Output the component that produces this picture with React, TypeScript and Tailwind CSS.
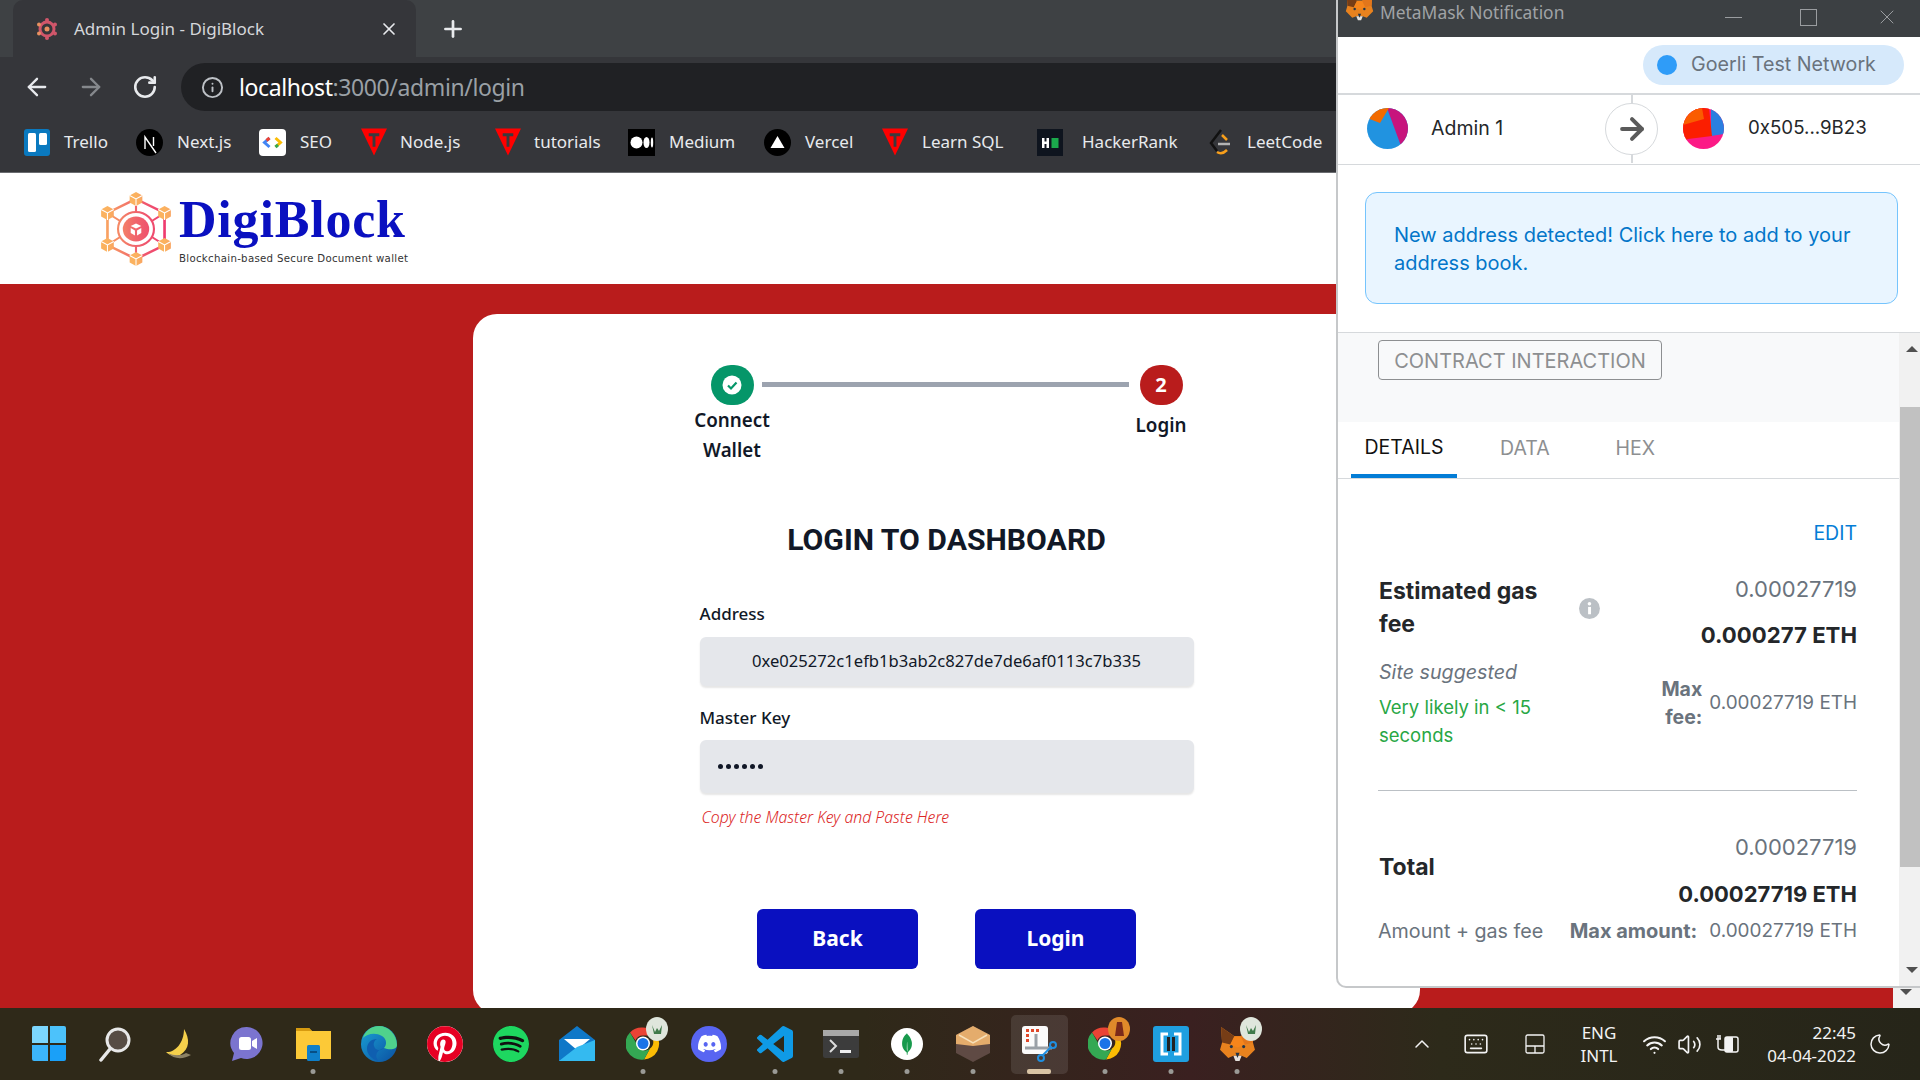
import { ChevronUp, Info, Keyboard, Moon, Volume2, Wifi, Plus, X, ArrowLeft, ArrowRight, RotateCw } from "lucide-react";
import { SiDiscord, SiMongodb, SiPinterest, SiSpotify } from "react-icons/si";

const chromeFont = "font-['Noto_Sans',sans-serif]";

const TriangleMark = () => (
  <svg width="26" height="28" viewBox="0 0 27 28">
    <polygon points="0,0 27,0 13.5,28" fill="#ff0000" />
    <path d="M8 5h11v3h-4v11h-3V8H8z" fill="#3a3a3e" />
  </svg>
);

const bookmarks = [
  {
    label: "Trello",
    width: "w-[112px]",
    gap: "gap-[14px]",
    icon: (
      <svg width="26" height="27" viewBox="0 0 26 27">
        <rect width="26" height="27" rx="3" fill="#0a79bf" />
        <rect x="4" y="4" width="8" height="19" rx="1.5" fill="#fff" />
        <rect x="15" y="4" width="8" height="12" rx="1.5" fill="#fff" />
      </svg>
    ),
  },
  {
    label: "Next.js",
    width: "w-[123px]",
    gap: "gap-[14px]",
    icon: (
      <svg width="27" height="27" viewBox="0 0 27 27">
        <circle cx="13.5" cy="13.5" r="13.5" fill="#000" />
        <path d="M9 20V8l11 16M17.5 8v9" stroke="#fff" strokeWidth="1.4" fill="none" />
      </svg>
    ),
  },
  {
    label: "SEO",
    width: "w-[102px]",
    gap: "gap-[14px]",
    icon: (
      <svg width="27" height="27" viewBox="0 0 27 27">
        <rect width="27" height="27" rx="4" fill="#fff" />
        <path d="M10.500 9l-5 4.500 5 4.500" stroke="#4285f4" strokeWidth="3" fill="none" />
        <path d="M7.500 11.500l3-2.500" stroke="#ea4335" strokeWidth="3" fill="none" />
        <path d="M16.500 9l5 4.500-5 4.500" stroke="#fbbc04" strokeWidth="3" fill="none" />
        <path d="M16.500 18l2.500-2.200" stroke="#34a853" strokeWidth="3" fill="none" />
      </svg>
    ),
  },
  { label: "Node.js", width: "w-[134px]", gap: "gap-[13px]", icon: <TriangleMark /> },
  { label: "tutorials", width: "w-[133px]", gap: "gap-[13px]", icon: <TriangleMark /> },
  {
    label: "Medium",
    width: "w-[136px]",
    gap: "gap-[14px]",
    icon: (
      <svg width="27" height="27" viewBox="0 0 27 27">
        <rect width="27" height="27" fill="#000" />
        <circle cx="8.500" cy="13.500" r="6" fill="#fff" />
        <ellipse cx="18.500" cy="13.500" rx="3" ry="5.500" fill="#fff" />
        <ellipse cx="24" cy="13.500" rx="1.200" ry="5" fill="#fff" />
      </svg>
    ),
  },
  {
    label: "Vercel",
    width: "w-[118px]",
    gap: "gap-[14px]",
    icon: (
      <svg width="27" height="27" viewBox="0 0 27 27">
        <circle cx="13.500" cy="13.500" r="13.500" fill="#000" />
        <polygon points="13.500,7 20.500,19 6.500,19" fill="#fff" />
      </svg>
    ),
  },
  { label: "Learn SQL", width: "w-[155px]", gap: "gap-[14px]", icon: <TriangleMark /> },
  {
    label: "HackerRank",
    width: "w-[171px]",
    gap: "gap-[19px]",
    icon: (
      <svg width="26" height="27" viewBox="0 0 26 27">
        <rect width="26" height="27" fill="#0e141e" />
        <path d="M5 9h2.500v3.500h2V9H12v10H9.500v-4h-2v4H5z" fill="#fff" />
        <rect x="14.500" y="9" width="7" height="10" fill="#1ba94c" />
      </svg>
    ),
  },
  {
    label: "LeetCode",
    width: "w-[120px]",
    gap: "gap-[15px]",
    icon: (
      <svg width="24" height="27" viewBox="0 0 24 27">
        <path d="M13 1L3 14l6 8" stroke="#111" strokeWidth="2.500" fill="none" />
        <path d="M14 6l5 5M9 23c3 2 7 1 10-2" stroke="#f89f1b" strokeWidth="2.500" fill="none" />
        <path d="M10 15h12" stroke="#b3b3b3" strokeWidth="2.500" />
      </svg>
    ),
  },
];

const Fox = ({ size = 36 }: { size?: number }) => (
  <svg width={size} height={size} viewBox="0 0 36 36">
    <polygon points="2,2 15,11 21,11 34,2 33,17 35,24 27,32 22,30 14,30 9,32 1,24 3,17" fill="#e8821e" />
    <polygon points="2,2 15,11 11,19 3,17" fill="#763d16" />
    <polygon points="34,2 21,11 25,19 33,17" fill="#e2761b" />
    <polygon points="15,11 21,11 25,19 18,22 11,19" fill="#f6851b" />
    <polygon points="14,30 22,30 20,35 16,35" fill="#e4e0dc" />
    <polygon points="16,27 20,27 18,32" fill="#233447" />
    <circle cx="12" cy="21" r="1.500" fill="#233447" />
    <circle cx="24" cy="21" r="1.500" fill="#233447" />
  </svg>
);

const ChromeIcon = () => (
  <svg width="34" height="35" viewBox="0 0 34 34">
    <path d="M17 1a16 16 0 0 1 14 8H17a8 8 0 0 0-7.500 5L4 6a16 16 0 0 1 13-5z" fill="#ea4335" />
    <path d="M31 9a16 16 0 0 1-13 24l6-11a8 8 0 0 0 0-13z" fill="#fbbc04" />
    <path d="M4 6l7 12a8 8 0 0 0 13 4l-6 11A16 16 0 0 1 4 6z" fill="#34a853" />
    <circle cx="17" cy="17" r="7" fill="#fff" />
    <circle cx="17" cy="17" r="5.500" fill="#1a73e8" />
  </svg>
);

// profile badge over the chrome / metamask icons
const GreenBadge = () => (
  <svg width="22" height="24" viewBox="0 0 22 24">
    <ellipse cx="11" cy="12" rx="11" ry="12" fill="#dfe6dc" />
    <path d="M6 8l3 7 2-4 2 3 3-6-1 9H8z" fill="#3f7a4a" />
  </svg>
);

const OrangeBadge = () => (
  <svg width="22" height="24" viewBox="0 0 22 24">
    <ellipse cx="11" cy="12" rx="11" ry="12" fill="#e08a2a" />
    <path d="M9 5h5l2 14H7z" fill="#7a2a1a" />
  </svg>
);

const taskbarIcons = [
  {
    dot: "",
    icon: (
      <div className="grid h-[35px] w-[34px] grid-cols-2 gap-[2px]">
        <span className="rounded-tl-[2px] bg-[#7cd6fd]" />
        <span className="rounded-tr-[2px] bg-[#4cc2fb]" />
        <span className="rounded-bl-[2px] bg-[#3cb5fb]" />
        <span className="rounded-br-[2px] bg-[#1aa0f8]" />
      </div>
    ),
  },
  {
    dot: "",
    icon: (
      <svg width="34" height="36" viewBox="0 0 34 36">
        <circle cx="20" cy="14" r="11" fill="#574c44" stroke="#e8e8e8" strokeWidth="3" />
        <path d="M12 23L3 34" stroke="#e8e8e8" strokeWidth="3.500" strokeLinecap="round" />
      </svg>
    ),
  },
  {
    dot: "",
    icon: (
      <svg width="34" height="34" viewBox="0 0 34 34">
        <path d="M20 2c6 10 6 20-4 26-5 2-10 1-14-3 8 1 18-8 18-23z" fill="#f5d04b" />
        <path d="M4 26c6 3 13 3 18 0l5 2c-7 4-17 5-23-2z" fill="#8c8164" />
      </svg>
    ),
  },
  {
    dot: "",
    icon: (
      <svg width="34" height="36" viewBox="0 0 34 36">
        <path d="M17 1a16 16 0 1 1-6 31l-9 3 2-8A16 16 0 0 1 17 1z" fill="#7b74cf" />
        <rect x="9" y="11" width="12" height="13" rx="2.500" fill="#fff" />
        <path d="M22 15l5-3v11l-5-3z" fill="#fff" />
      </svg>
    ),
  },
  {
    dot: "bg-[#9a9a96]",
    icon: (
      <svg width="37" height="35" viewBox="0 0 37 35">
        <path d="M1 2h13l3 3h19v28H1z" fill="#fcc937" />
        <path d="M1 2h13l3 3H1z" fill="#d69a10" />
        <rect x="12" y="19" width="13" height="16" rx="1.500" fill="#0f7fc9" />
        <rect x="15" y="25" width="7" height="2" fill="#074f85" />
      </svg>
    ),
  },
  {
    dot: "",
    icon: (
      <svg width="36" height="36" viewBox="0 0 36 36">
        <defs>
          <linearGradient id="edgeGrad" x1="0" y1="0" x2="1" y2="1">
            <stop offset="0" stopColor="#1aa2d6" />
            <stop offset="1" stopColor="#0b4fa0" />
          </linearGradient>
        </defs>
        <circle cx="18" cy="18" r="18" fill="url(#edgeGrad)" />
        <path d="M36 19C36 8 27 0 18 0 10 0 4 5 2 12c4-4 12-6 19-2 5 3 5 9 2 12 5 2 13 2 13-3z" fill="#4fd18c" />
        <path d="M23 22c-4 4-9 2-10-2-1-3 1-6 3-7-6 0-10 4-10 10 0 5 5 11 12 12-5-4-3-11 5-13z" fill="#0f5fb0" />
      </svg>
    ),
  },
  {
    dot: "",
    icon: (
      <span className="flex h-9 w-9 items-center justify-center rounded-full bg-white text-[#e60023]">
        <SiPinterest size={36} />
      </span>
    ),
  },
  {
    dot: "",
    icon: (
      <span className="flex h-9 w-9 items-center justify-center rounded-full bg-[#111] text-[#1ed760]">
        <SiSpotify size={36} />
      </span>
    ),
  },
  {
    dot: "",
    icon: (
      <svg width="36" height="35" viewBox="0 0 36 35">
        <polygon points="18,0 36,14 36,35 0,35 0,14" fill="#0f78c8" />
        <polygon points="5,13 31,13 18,24" fill="#fff" />
        <polygon points="36,14 36,35 0,35 18,21" fill="#34baf0" />
      </svg>
    ),
  },
  {
    dot: "bg-[#9a9a96]",
    badge: <GreenBadge />,
    icon: <ChromeIcon />,
  },
  {
    dot: "",
    icon: (
      <span className="flex h-9 w-9 items-center justify-center rounded-full bg-[#5865f2] text-white">
        <SiDiscord size={23} />
      </span>
    ),
  },
  {
    dot: "bg-[#9a9a96]",
    icon: (
      <svg width="36" height="36" viewBox="0 0 24 24">
        <path
          d="M23.15 2.587L18.21.21a1.494 1.494 0 0 0-1.705.29l-9.46 8.63-4.12-3.128a.999.999 0 0 0-1.276.057L.327 7.261A1 1 0 0 0 .326 8.74L3.899 12 .326 15.26a1 1 0 0 0 .001 1.479L1.65 17.94a.999.999 0 0 0 1.276.057l4.12-3.128 9.46 8.63a1.492 1.492 0 0 0 1.704.29l4.942-2.377A1.5 1.5 0 0 0 24 20.06V3.939a1.5 1.5 0 0 0-.85-1.352zm-5.146 14.861L10.826 12l7.178-5.448v10.896z"
          fill="#0f9ae6"
        />
      </svg>
    ),
  },
  {
    dot: "bg-[#9a9a96]",
    icon: (
      <svg width="36" height="28" viewBox="0 0 36 28">
        <rect width="36" height="28" rx="2.500" fill="#3c3c3c" />
        <rect width="36" height="6" fill="#a8a8a8" />
        <path d="M7 10l6 6-6 6" stroke="#ddd" strokeWidth="2" fill="none" />
        <rect x="17" y="20" width="11" height="3" fill="#eee" />
      </svg>
    ),
  },
  {
    dot: "bg-[#9a9a96]",
    icon: (
      <span className="flex h-[32px] w-[32px] items-center justify-center rounded-full bg-white text-[#189a4d]">
        <SiMongodb size={22} />
      </span>
    ),
  },
  {
    dot: "bg-[#9a9a96]",
    icon: (
      <svg width="34" height="36" viewBox="0 0 34 36">
        <polygon points="17,0 34,9 34,27 17,36 0,27 0,9" fill="#5f4a44" />
        <polygon points="17,0 34,9 34,18 17,20 0,18 0,9" fill="#e4ac6c" />
        <path d="M3 9l14 8 14-8" stroke="#f8e0b8" strokeWidth="1.500" fill="none" />
      </svg>
    ),
  },
  {
    dot: "bg-[#d9c4a4] !w-[24px] !rounded-[2px]",
    active: true,
    icon: (
      <svg width="36" height="36" viewBox="0 0 36 36">
        <rect x="1" y="0" width="26" height="28" rx="3" fill="#fbfbfb" />
        <rect x="5" y="3" width="3" height="3" fill="#e0482a" />
        <rect x="10" y="3" width="3" height="3" fill="#e0482a" />
        <rect x="15" y="3" width="3" height="3" fill="#e0482a" />
        <rect x="5" y="8" width="3" height="3" fill="#e0482a" />
        <rect x="5" y="13" width="3" height="3" fill="#e0482a" />
        <path d="M15 8v14M4 22h27" stroke="#9aa0a6" strokeWidth="3" />
        <circle cx="32" cy="19" r="3" fill="none" stroke="#1f8fe0" strokeWidth="2" />
        <circle cx="20" cy="32" r="3" fill="none" stroke="#1f8fe0" strokeWidth="2" />
        <path d="M22 29l8-8" stroke="#1f8fe0" strokeWidth="2" />
      </svg>
    ),
  },
  {
    dot: "bg-[#9a9a96]",
    badge: <OrangeBadge />,
    icon: <ChromeIcon />,
  },
  {
    dot: "bg-[#9a9a96]",
    icon: (
      <svg width="36" height="36" viewBox="0 0 36 36">
        <rect width="36" height="36" rx="3" fill="#1f9fe0" />
        <path d="M15 8H9v20h6" fill="none" stroke="#fff" strokeWidth="3" />
        <path d="M21 8h6v20h-6" fill="none" stroke="#fff" strokeWidth="3" />
        <rect x="14" y="11" width="3" height="14" fill="#222" />
        <rect x="19" y="11" width="3" height="14" fill="#222" />
      </svg>
    ),
  },
  {
    dot: "bg-[#9a9a96]",
    badge: <GreenBadge />,
    icon: <Fox size={37} />,
  },
];

const BrowserChrome = () => (
  <div className={`${chromeFont} shrink-0`}>
    <div className="flex h-[57px] bg-[#3e4144] pl-[13px]">
      <div className="flex h-full w-[403px] items-center rounded-t-[10px] bg-[#35363a] pl-[22px] pr-[17px]">
        <svg width="24" height="24" viewBox="0 0 24 24">
          <circle cx="12" cy="12" r="7" fill="none" stroke="#d0566a" strokeWidth="3" />
          <circle cx="12" cy="12" r="2.500" fill="#e89060" />
          <circle cx="12" cy="3" r="2" fill="#d0566a" />
          <circle cx="12" cy="21" r="2" fill="#d0566a" />
          <circle cx="4" cy="7.500" r="2" fill="#e89060" />
          <circle cx="20" cy="7.500" r="2" fill="#d0566a" />
          <circle cx="4" cy="16.500" r="2" fill="#e89060" />
          <circle cx="20" cy="16.500" r="2" fill="#d0566a" />
        </svg>
        <span className="ml-[15px] flex-1 text-[17px] text-[#d5d7da]">Admin Login - DigiBlock</span>
        <X size={20} className="text-[#e8eaed]" />
      </div>
      <div className="flex items-center pl-[24px] text-[#e8eaed]">
        <Plus size={26} strokeWidth={2.5} />
      </div>
    </div>
    <div className="flex h-[55px] items-center bg-[#35363a] pb-[1px] pt-[6px]">
      <ArrowLeft size={28} strokeWidth={2} className="ml-[23px] text-[#e8eaed]" />
      <ArrowRight size={28} strokeWidth={2} className="ml-[26px] text-[#85888c]" />
      <RotateCw size={26} strokeWidth={2.4} className="ml-[27px] text-[#e8eaed]" />
      <div className="ml-[23px] flex h-[48px] flex-1 items-center rounded-l-full bg-[#202124] pl-[20px]">
        <Info size={23} className="text-[#bdc1c6]" />
        <span className="ml-[15px] text-[23px] tracking-[-0.4px] text-white">
          localhost<span className="text-[#9aa0a6]">:3000/admin/login</span>
        </span>
      </div>
    </div>
    <div className="flex h-[61px] items-start border-b border-[#6a6c70] bg-[#35363a] pl-[24px] pt-[16px]">
      {bookmarks.map((b) => (
        <div key={b.label} className={`${b.width} ${b.gap} flex h-[28px] shrink-0 items-center`}>
          {b.icon}
          <span className="whitespace-nowrap text-[17px] text-[#e8eaed]">{b.label}</span>
        </div>
      ))}
    </div>
  </div>
);

const Cube = ({ x, y }: { x: number; y: number }) => (
  <g transform={`translate(${x} ${y})`}>
    <polygon points="0,-7 6,-3.500 6,3.500 0,7 -6,3.500 -6,-3.500" fill="url(#logoGrad)" />
    <path d="M-6,-3.500 L0,0 L6,-3.500 M0,0 V7" stroke="#fff" strokeWidth="1" fill="none" />
  </g>
);

const Logo = () => (
  <div className="flex items-start">
    <svg width="74" height="76" viewBox="0 0 70 76" preserveAspectRatio="none">
      <defs>
        <linearGradient id="logoGrad" gradientUnits="userSpaceOnUse" x1="0" y1="0" x2="70" y2="0">
          <stop offset="0" stopColor="#fbb25f" />
          <stop offset="0.5" stopColor="#f0646c" />
          <stop offset="1" stopColor="#ee2f70" />
        </linearGradient>
      </defs>
      <polygon points="35,8 62,22 62,54 35,68 8,54 8,22" fill="none" stroke="url(#logoGrad)" strokeWidth="2.500" />
      <path d="M35 8V20M8 22L20 30M62 22L50 30M8 54L20 46M62 54L50 46M35 68V56" stroke="url(#logoGrad)" strokeWidth="2" />
      <circle cx="35" cy="38" r="17" fill="#fff" stroke="url(#logoGrad)" strokeWidth="2" />
      <circle cx="35" cy="38" r="12.500" fill="url(#logoGrad)" />
      <path d="M30 35l5-2.500 5 2.500-5 2.500zM30 37l4 2.500v5l-4-2.500zM40 37l-4 2.500v5l4-2.500z" fill="#fff" />
      <Cube x={35} y={8} />
      <Cube x={62} y={22} />
      <Cube x={62} y={54} />
      <Cube x={35} y={68} />
      <Cube x={8} y={54} />
      <Cube x={8} y={22} />
    </svg>
    <div className="ml-[6px]">
      <div className="mt-[1px] font-['Liberation_Serif',serif] text-[52px] font-bold leading-[56px] tracking-[0.8px] text-[#0a10c0]">
        DigiBlock
      </div>
      <div className="mt-[3px] whitespace-nowrap font-['DejaVu_Sans',sans-serif] text-[10.200px] leading-[16px] tracking-[0.3px] text-[#333]">
        Blockchain-based Secure Document wallet
      </div>
    </div>
  </div>
);

const LoginCard = () => (
  <div className="h-[700px] w-[947px] rounded-[24px] bg-white pt-[51px] font-['Noto_Sans',sans-serif] text-[#111827]">
    <div className="mx-auto flex w-[519px] items-start">
      <div className="flex w-[90px] shrink-0 flex-col items-center">
        <div className="flex h-[40px] w-[43px] items-center justify-center rounded-full bg-[#059669]">
          <svg width="20" height="20" viewBox="0 0 20 20">
            <circle cx="10" cy="10" r="9.500" fill="#fff" />
            <path d="M6 10.500l3 3 5.500-6" stroke="#059669" strokeWidth="2.200" fill="none" />
          </svg>
        </div>
        <div className="text-center text-[18.800px] font-semibold leading-[30px]">
          Connect
          <br />
          Wallet
        </div>
      </div>
      <div className="z-10 -ml-[15px] -mr-[13px] mt-[17px] h-[5px] flex-1 bg-[#9ca3af]" />
      <div className="flex w-[90px] shrink-0 flex-col items-center">
        <div className="flex h-[40px] w-[43px] items-center justify-center rounded-full bg-[#b91c1c] text-[20px] font-bold text-white">
          2
        </div>
        <div className="mt-[5px] text-[18.800px] font-semibold leading-[30px]">Login</div>
      </div>
    </div>
    <div className="mt-[57px] text-center font-['Roboto',sans-serif] text-[30.200px] font-bold leading-[36px]">
      LOGIN TO DASHBOARD
    </div>
    <div className="mx-auto w-[494px]">
      <div className="mt-[44px] text-[17px] font-medium leading-[24px]">Address</div>
      <div className="mt-[11px] flex h-[49px] items-center justify-center rounded-md bg-[#e5e7eb] text-[16.600px] shadow-[0_2px_2px_rgba(0,0,0,0.1)]">
        0xe025272c1efb1b3ab2c827de7de6af0113c7b335
      </div>
      <div className="mt-[20px] text-[17px] font-medium leading-[24px]">Master Key</div>
      <div className="mt-[10px] flex h-[53px] items-center gap-[2.500px] rounded-md bg-[#e5e7eb] pl-[18px] shadow-[0_2px_2px_rgba(0,0,0,0.1)]">
        {[0, 1, 2, 3, 4, 5].map((i) => (
          <span key={i} className="h-[5.500px] w-[5.500px] rounded-full bg-[#111827]" />
        ))}
      </div>
      <div className="mt-[14px] pl-[2px] text-[15.800px] font-light italic leading-[20px] text-[#dc2626]">
        Copy the Master Key and Paste Here
      </div>
      <div className="mt-[82px] flex justify-center gap-[57px]">
        <button className="h-[60px] w-[161px] rounded-md bg-[#0a10c0] text-[21px] font-bold text-white">Back</button>
        <button className="h-[60px] w-[161px] rounded-md bg-[#0a10c0] text-[21px] font-bold text-white">Login</button>
      </div>
    </div>
  </div>
);

const Avatar = ({ right = false }: { right?: boolean }) => (
  <svg width="41" height="41" viewBox="0 0 41 41">
    <clipPath id={right ? "avR" : "avL"}>
      <circle cx="20.500" cy="20.500" r="20.500" />
    </clipPath>
    {right ? (
      <g clipPath="url(#avR)">
        <rect width="41" height="41" fill="#fc1a86" />
        <polygon points="28,0 41,0 41,26 28,28" fill="#2b7fe0" />
        <polygon points="0,16 0,33 5,31 29,28 26,0 6,0" fill="#fb1e00" />
        <polygon points="0,0 19,0 21,11 0,17" fill="#fa5c00" />
      </g>
    ) : (
      <g clipPath="url(#avL)">
        <rect width="41" height="41" fill="#2193e0" />
        <polygon points="20,0 41,0 41,30 34,38" fill="#c7147d" />
        <polygon points="0,0 22,0 13,15 0,10" fill="#f26a00" />
      </g>
    )}
  </svg>
);

const GasDetails = () => (
  <div className="pl-[40px] pr-[42px]">
    <div className="mt-[42px] text-right text-[19.500px] leading-[24px] text-[#037dd6]">EDIT</div>
    <div className="mt-[30px] flex h-[76px] items-start justify-between">
      <div className="flex w-[222px] items-center">
        <div className="w-[190px] pl-[1px] text-[23px] font-bold leading-[33px] text-[#24272a]">
          Estimated gas
          <br />
          fee
        </div>
        <svg width="21" height="21" viewBox="0 0 20 20" className="ml-[12px]">
          <circle cx="10" cy="10" r="10" fill="#bbc0c5" />
          <rect x="8.700" y="8.500" width="2.800" height="7" fill="#fff" />
          <circle cx="10" cy="5.500" r="1.700" fill="#fff" />
        </svg>
      </div>
      <div className="text-right">
        <div className="text-[22px] leading-[28px] text-[#6a737d]">0.00027719</div>
        <div className="mt-[16px] text-[22.200px] font-bold leading-[32px] text-[#24272a]">0.000277 ETH</div>
      </div>
    </div>
    <div className="mt-[9px] flex items-start justify-between pl-[1px]">
      <div className="w-[180px]">
        <div className="text-[19.700px] italic leading-[24px] text-[#6a737d]">Site suggested</div>
        <div className="mt-[9px] text-[18.500px] leading-[28px] text-[#28a745]">
          Very likely in &lt; 15
          <br />
          seconds
        </div>
      </div>
      <div className="mt-[15px] flex items-center">
        <div className="w-[54px] text-right text-[19.500px] font-bold leading-[28px] text-[#6a737d]">
          Max
          <br />
          fee:
        </div>
        <div className="ml-[7px] text-[18.900px] leading-[28px] text-[#6a737d]">0.00027719 ETH</div>
      </div>
    </div>
    <div className="mt-[41px] h-px bg-[#bbc0c5]" />
    <div className="mt-[42px] flex h-[77px] items-start justify-between pl-[1px]">
      <div className="mt-[20px] text-[23px] font-bold leading-[28px] text-[#24272a]">Total</div>
      <div className="text-right">
        <div className="text-[22px] leading-[28px] text-[#6a737d]">0.00027719</div>
        <div className="mt-[17px] text-[22px] font-bold leading-[32px] text-[#24272a]">0.00027719 ETH</div>
      </div>
    </div>
    <div className="mt-[9px] flex items-center justify-between leading-[24px] text-[#6a737d]">
      <span className="text-[19.700px]">Amount + gas fee</span>
      <span className="flex items-center text-[18.900px]">
        <span className="text-[20px] font-bold">Max amount:</span>
        <span className="ml-[12px]">0.00027719 ETH</span>
      </span>
    </div>
  </div>
);

const MetaMaskWindow = () => (
  <div className="absolute left-[1336px] top-0 z-20 flex h-[988px] w-[584px] flex-col overflow-hidden rounded-bl-[10px] border-b-2 border-l-2 border-[#c6c8ca] bg-white font-['Inter',sans-serif]">
    <div className="flex h-[37px] shrink-0 items-start bg-[#3c4043]">
      <div className="ml-[7px] -mt-[8px]">
        <Fox size={29} />
      </div>
      <span className={`${chromeFont} ml-[6px] text-[17.400px] leading-[24px] text-[#a0a3a6]`}>MetaMask Notification</span>
      <div className="ml-auto flex items-center pt-[5px] text-[#9a9da0]">
        <span className="h-px w-[17px] bg-[#9a9da0]" />
        <span className="ml-[58px] h-[17px] w-[17px] border border-[#9a9da0]" />
        <X size={24} strokeWidth={1} className="ml-[58px] mr-[21px]" />
      </div>
    </div>
    <div className="flex h-[58px] shrink-0 items-start justify-end border-b-2 border-[#d6d9dc] pr-[16px] pt-[8px]">
      <div className="flex h-[40px] w-[261px] items-center rounded-full bg-[#d6e9fb] pl-[14px]">
        <span className="h-[20px] w-[20px] rounded-full bg-[#2f9cf8]" />
        <span className="ml-[14px] text-[19.700px] text-[#6a737d]">Goerli Test Network</span>
      </div>
    </div>
    <div className="flex h-[70px] shrink-0 items-center border-b border-[#d6d9dc] pb-[2px] pl-[29px]">
      <Avatar />
      <span className="ml-[23px] w-[174px] text-[19.500px] text-[#24272a]">Admin 1</span>
      <div className="relative flex h-[69px] w-[53px] items-center justify-center">
        <span className="absolute left-1/2 top-0 h-full w-[2px] -translate-x-1/2 bg-[#d6d9dc]" />
        <span className="relative flex h-[52px] w-[53px] items-center justify-center rounded-full border border-[#d6d9dc] bg-white text-[#5a5a5a]">
          <ArrowRight size={34} strokeWidth={2.8} />
        </span>
      </div>
      <span className="ml-[25px]">
        <Avatar right />
      </span>
      <span className="ml-[24px] text-[18.700px] text-[#24272a]">0x505...9B23</span>
    </div>
    <div className="h-[168px] shrink-0 border-b border-[#d6d9dc] pl-[27px] pt-[27px]">
      <div className="flex h-[112px] w-[533px] items-center rounded-[12px] border border-[#75c4fd] bg-[#e9f5ff] px-[28px] pt-[2px] text-[20px] leading-[28px] text-[#0376c9]">
        New address detected! Click here to add to your address book.
      </div>
    </div>
    <div className="flex min-h-0 flex-1">
      <div className="min-w-0 flex-1">
        <div className="h-[89px] bg-[#f8f9fa] pl-[40px] pt-[7px]">
          <div className="flex h-[40px] w-[284px] items-center justify-center rounded-[4px] border border-[#8d8f91] pt-[1px] text-[20px] text-[#8d8f91]">
            CONTRACT INTERACTION
          </div>
        </div>
        <div className="flex h-[57px] border-b border-[#d6d9dc] pl-[13px] text-[19.500px] text-[#8d8f91]">
          <div className="flex w-[106px] items-center justify-center border-b-[4px] border-[#037dd6] text-[#111]">DETAILS</div>
          <div className="ml-[43px] flex items-center pb-[3px]">DATA</div>
          <div className="ml-[66px] flex items-center pb-[3px]">HEX</div>
        </div>
        <GasDetails />
      </div>
      <div className="relative w-[21px] shrink-0 bg-[#f1f1f1]">
        <span className="absolute left-[7px] top-[13px] h-0 w-0 border-x-[6px] border-b-[6px] border-x-transparent border-b-[#505050]" />
        <div className="absolute left-[1px] right-0 top-[74px] h-[460px] bg-[#c1c1c1]" />
        <span className="absolute bottom-[13px] left-[7px] h-0 w-0 border-x-[6px] border-t-[6px] border-x-transparent border-t-[#505050]" />
      </div>
    </div>
  </div>
);

const Taskbar = () => (
  <div className="flex h-[72px] shrink-0 items-center bg-[linear-gradient(90deg,#2f2919_0%,#2f2919_45%,#3a2020_62%,#2d2a1a_75%,#262519_100%)] pl-[16px] font-['Noto_Sans',sans-serif]">
    {taskbarIcons.map((t, i) => (
      <div key={i} className="relative flex h-[72px] w-[66px] items-center justify-center">
        {t.active && <span className="absolute left-[5px] top-[7px] h-[59px] w-[57px] rounded-[5px] bg-white/10" />}
        <span className="relative -mt-[1px]">{t.icon}</span>
        {t.badge && <span className="absolute left-[36px] top-[9px]">{t.badge}</span>}
        {t.dot && <span className={`absolute bottom-[6px] left-1/2 h-[5px] w-[5px] -translate-x-1/2 rounded-full ${t.dot}`} />}
      </div>
    ))}
    <div className="ml-[140px] flex items-center text-[#f3f3f3]">
      <ChevronUp size={24} strokeWidth={1.5} />
      <Keyboard size={26} strokeWidth={1.5} className="ml-[29px]" />
      <svg width="20" height="20" viewBox="0 0 20 20" className="ml-[36px]">
        <rect x="1" y="1" width="18" height="18" rx="1.500" fill="none" stroke="currentColor" strokeWidth="1.300" />
        <path d="M1 12h18M10 12v7" stroke="currentColor" strokeWidth="1.300" />
      </svg>
      <div className="ml-[29px] w-[50px] text-center text-[17px] leading-[23px]">
        ENG
        <br />
        INTL
      </div>
      <Wifi size={25} strokeWidth={2} className="ml-[18px]" />
      <Volume2 size={25} strokeWidth={1.6} className="ml-[10px]" />
      <svg width="25" height="25" viewBox="0 0 25 25" className="ml-[13px]">
        <rect x="10" y="5" width="13" height="15" rx="2" fill="none" stroke="currentColor" strokeWidth="1.500" />
        <rect x="10" y="5" width="8" height="15" rx="1" fill="currentColor" />
        <path d="M3 7v8c0 2 2 3 4 3h3M1 7h5M3 3v4M5 3v4" stroke="currentColor" strokeWidth="1.500" fill="none" />
      </svg>
      <div className="ml-[14px] w-[102px] text-right text-[17px] leading-[23px]">
        22:45
        <br />
        04-04-2022
      </div>
      <Moon size={24} strokeWidth={1.5} className="ml-[12px]" />
    </div>
  </div>
);

export default function App() {
  return (
    <div className="relative flex h-[1080px] w-[1920px] flex-col overflow-hidden bg-white">
      <BrowserChrome />
      <div className="flex min-h-0 flex-1">
        <div className="flex min-w-0 flex-1 flex-col">
          <div className="h-[111px] shrink-0 bg-white pl-[99px] pt-[18px]">
            <Logo />
          </div>
          <div className="min-h-0 flex-1 overflow-hidden bg-[#b91c1c] pl-[473px] pt-[30px]">
            <LoginCard />
          </div>
        </div>
        <div className="relative w-[27px] shrink-0 bg-[#f1f1f1]">
          <span className="absolute bottom-[13px] left-[7px] h-0 w-0 border-x-[6px] border-t-[6px] border-x-transparent border-t-[#505050]" />
        </div>
      </div>
      <Taskbar />
      <MetaMaskWindow />
    </div>
  );
}
